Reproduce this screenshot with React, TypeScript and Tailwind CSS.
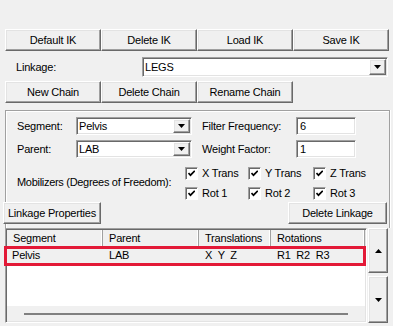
import React from 'react';

const raised =
  'bg-[#f0f0f0] border border-t-white border-l-white border-b-[#696969] border-r-[#696969] shadow-[inset_-1px_-1px_0_#a0a0a0,inset_1px_1px_0_#e3e3e3]';
const sunken =
  'bg-white border border-t-[#a0a0a0] border-l-[#a0a0a0] border-b-white border-r-white shadow-[inset_1px_1px_0_#696969,inset_-1px_-1px_0_#e3e3e3]';

const Tri: React.FC<{ up?: boolean }> = ({ up }) => (
  <svg width="7" height="4" viewBox="0 0 7 4">
    <polygon points={up ? '0,4 7,4 3.5,0' : '0,0 7,0 3.5,4'} fill="#000" />
  </svg>
);

const Btn: React.FC<{ className?: string; children: React.ReactNode }> = ({ className = '', children }) => (
  <div className={`${raised} flex items-center justify-center h-full whitespace-nowrap ${className}`}>{children}</div>
);

const Combo: React.FC<{ value: string; className?: string }> = ({ value, className = '' }) => (
  <div className={`${sunken} p-[1px] flex items-stretch ${className}`}>
    <span className="flex-1 flex items-center pl-[1px]">{value}</span>
    <div className={`${raised} w-[17px] flex items-center justify-center`}>
      <Tri />
    </div>
  </div>
);

const Check: React.FC = () => (
  <div className="w-[13px] h-[13px] bg-white border border-t-[#a0a0a0] border-l-[#a0a0a0] border-b-white border-r-white shadow-[inset_1px_1px_0_#696969] flex items-center justify-center">
    <svg width="7" height="7" viewBox="0 0 7 7">
      <path d="M0.5 3 L2.5 5.2 L6.8 0.8" stroke="#000" strokeWidth="1.7" fill="none" />
    </svg>
  </div>
);

const CheckItem: React.FC<{ label: string; className?: string }> = ({ label, className = '' }) => (
  <div className={`flex items-center gap-[4px] h-[13px] whitespace-nowrap ${className}`}>
    <Check />
    <span>{label}</span>
  </div>
);

const HeaderCell: React.FC<{ label: string; className?: string }> = ({ label, className = '' }) => (
  <div className={`h-full flex items-center pl-[6px] border-r border-r-[#a0a0a0] shadow-[inset_-1px_0_0_#fff] ${className}`}>
    {label}
  </div>
);

const App: React.FC = () => {
  return (
    <div className="relative w-[393px] h-[326px] overflow-hidden bg-[#f0f0f0] text-[11px] leading-none text-black font-['Liberation_Sans',Arial,sans-serif] tracking-[-0.2px]">
      <div className="pt-[29px] pl-[5px]">
        <div className="flex h-[22px]">
          {['Default IK', 'Delete IK', 'Load IK', 'Save IK'].map((t) => (
            <Btn key={t} className="w-[96px]">{t}</Btn>
          ))}
        </div>

        <div className="flex items-center h-[20px] mt-[6px]">
          <span className="w-[137px] pl-[11px]">Linkage:</span>
          <Combo value="LEGS" className="w-[246px] h-[20px]" />
        </div>

        <div className="flex h-[22px] mt-[4px]">
          {['New Chain', 'Delete Chain', 'Rename Chain'].map((t) => (
            <Btn key={t} className="w-[96px]">{t}</Btn>
          ))}
        </div>

        {/* group box */}
        <div className="mt-[7px] w-[385px] border border-[#a0a0a0] border-b-0 shadow-[inset_1px_1px_0_#fff,1px_0_0_#fff] pt-[6px] pb-[4px]">
          <div className="flex items-center h-[18px]">
            <span className="w-[59px] ml-[11px]">Segment:</span>
            <Combo value="Pelvis" className="w-[116px] h-[18px]" />
            <span className="w-[94px] ml-[10px]">Filter Frequency:</span>
            <div className={`${sunken} w-[60px] h-[18px] flex items-center pl-[3px]`}>6</div>
          </div>
          <div className="flex items-center h-[18px] mt-[5px]">
            <span className="w-[59px] ml-[11px]">Parent:</span>
            <Combo value="LAB" className="w-[116px] h-[18px]" />
            <span className="w-[94px] ml-[10px]">Weight Factor:</span>
            <div className={`${sunken} w-[60px] h-[18px] flex items-center pl-[3px]`}>1</div>
          </div>

          <div className="flex items-center mt-[9px]">
            <span className="w-[179px] shrink-0 pl-[11px] pb-[3px] whitespace-nowrap tracking-[-0.3px]">
              Mobilizers (Degrees of Freedom):
            </span>
            <div className="flex flex-col gap-[7px]">
              <div className="flex">
                <CheckItem label="X Trans" className="w-[63px]" />
                <CheckItem label="Y Trans" className="w-[65px]" />
                <CheckItem label="Z Trans" />
              </div>
              <div className="flex">
                <CheckItem label="Rot 1" className="w-[63px]" />
                <CheckItem label="Rot 2" className="w-[65px]" />
                <CheckItem label="Rot 3" />
              </div>
            </div>
          </div>

          <div className="flex justify-between h-[22px] mt-[2px]">
            <Btn className="w-[98px] -ml-[3px]">Linkage Properties</Btn>
            <Btn className="w-[99px] mr-[2px]">Delete Linkage</Btn>
          </div>
        </div>

        {/* list */}
        <div className="flex h-[95px]">
          <div className={`${sunken} w-[362px] p-[1px] flex flex-col`}>
            <div className="flex h-[17px] bg-[#f0f0f0] border-b border-b-[#d5d5d5]">
              <HeaderCell label="Segment" className="w-[96px]" />
              <HeaderCell label="Parent" className="w-[96px]" />
              <HeaderCell label="Translations" className="w-[72px]" />
              <HeaderCell label="Rotations" className="w-[94px]" />
            </div>
            <div className="flex items-center h-[17px] bg-[#f0f0f0] whitespace-pre">
              <span className="w-[96px] pl-[5px]">Pelvis</span>
              <span className="w-[96px] pl-[6px]">LAB</span>
              <span className="w-[72px] pl-[6px]">X  Y  Z</span>
              <span className="pl-[6px]">R1  R2  R3</span>
            </div>
            <div className="flex-1 bg-white" />
            <div className="h-[15px] bg-[#f0f0f0] flex items-center">
              <div className="ml-[17px] w-[324px] h-[2px] bg-[#808080]" />
            </div>
          </div>
          <div className="ml-[1px] w-[20px] flex flex-col gap-[3px]">
            <Btn className="!h-[45px] w-full">
              <Tri up />
            </Btn>
            <Btn className="!h-[47px] w-full">
              <Tri />
            </Btn>
          </div>
        </div>
      </div>

      {/* highlight annotation */}
      <div className="absolute left-[4px] top-[246px] w-[362px] h-[20px] border-[3px] border-[#e31937]" />
    </div>
  );
};

export default App;
